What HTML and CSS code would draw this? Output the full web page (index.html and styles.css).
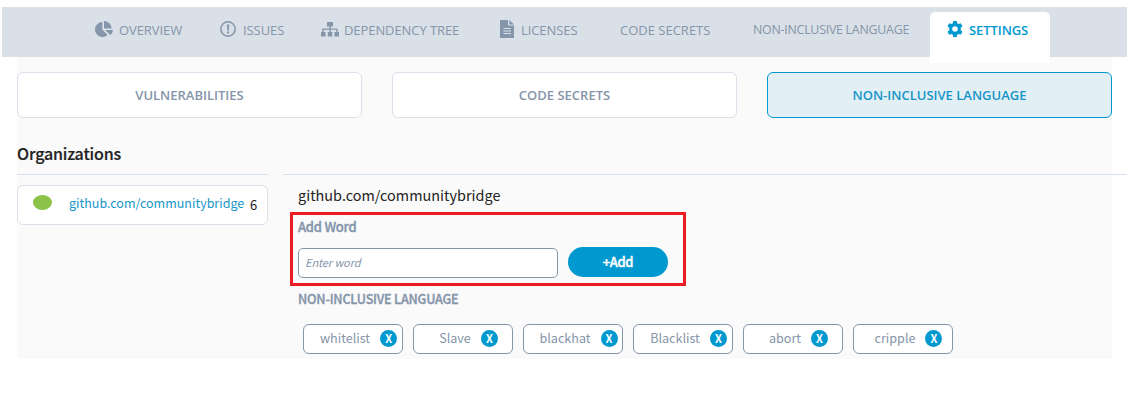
FILE: index.html
```html
<!DOCTYPE html>
<html lang="en">
<head>
<meta charset="utf-8">
<title>Settings</title>
<link rel="stylesheet" href="styles.css">
</head>
<body>
<nav class="tabs">
  <a class="tab"><svg class="icon" width="18" height="17" viewBox="0 0 18 17"><path d="M7.300 1v7.600l5.300 5.400A7.500 7.500 0 1 1 7.300 1z"/><path d="M9 0a7.500 7.500 0 0 1 7.500 7.500H9z"/><path d="M10 9h8a7 7 0 0 1-2.600 5z"/></svg><span>OVERVIEW</span></a>
  <a class="tab tab-issues"><svg class="icon" width="16" height="16" viewBox="0 0 16 16"><circle cx="8" cy="8" r="7.2" fill="none" stroke="currentColor" stroke-width="1.5"/><path d="M7 3.400h2.200L8.900 9.400H7.300zM7 10.600h2v2H7z"/></svg><span>ISSUES</span></a>
  <a class="tab tab-tree"><svg class="icon" width="18" height="15" viewBox="0 0 18 15"><path d="M6 0h6v4.500H9.700v2h7V10h-1.400V7.800H9.700V10H8.300V7.800H2.700V10H1.300V6.500h7v-2H6z"/><path d="M0 10h4.500v4.500H0zM6.800 10h4.500v4.500H6.800zM13.500 10H18v4.500h-4.500z"/></svg><span>DEPENDENCY TREE</span></a>
  <a class="tab tab-file"><svg class="icon" width="14" height="18" viewBox="0 0 14 18"><path fill-rule="evenodd" d="M0 0h8v5.500h6V18H0zM3.500 8v1h7.500V8zM3.500 10.500v1h7.500v-1zM3.500 13v1h7.500v-1z"/><path d="M9.300 0 14 4.500H9.300z"/></svg><span>LICENSES</span></a>
  <a class="tab tab-secrets"><span>CODE SECRETS</span></a>
  <a class="tab tab-language"><span>NON-INCLUSIVE LANGUAGE</span></a>
  <a class="tab tab-active"><svg class="icon" width="16" height="16" viewBox="0 0 16 16"><path fill-rule="evenodd" d="M6.200 0h3.600l.4 2.200 1.300.8 2.200-.8 1.800 3-1.800 1.500v2.600l1.800 1.500-1.800 3-2.200-.8-1.300.8-.4 2.200H6.200L5.800 13.800 4.500 13l-2.200.8-1.800-3 1.800-1.500V6.700L.5 5.200l1.800-3L4.500 3l1.300-.8zM8 5.200a2.800 2.800 0 1 0 0 5.600 2.800 2.800 0 0 0 0-5.600z"/></svg><span>SETTINGS</span></a>
</nav>
<main class="panel">
  <div class="sections">
    <button class="section">VULNERABILITIES</button>
    <button class="section">CODE SECRETS</button>
    <button class="section section-active">NON-INCLUSIVE LANGUAGE</button>
  </div>
  <div class="columns">
    <aside class="orgs">
      <h2 class="orgs-title">Organizations</h2>
      <div class="org"><i class="dot"></i><a class="org-name">github.com/communitybridge</a><span class="org-count">6</span></div>
    </aside>
    <section class="detail">
      <div class="detail-title">github.com/communitybridge</div>
      <form class="add-word">
        <label class="label add-label" for="word">Add Word</label>
        <div class="add-row">
          <input class="word-input" id="word" placeholder="Enter word">
          <button class="add-button" type="button"><span>+Add</span></button>
        </div>
      </form>
      <div class="label list-label">NON-INCLUSIVE LANGUAGE</div>
      <div class="words">
        <div class="word"><span>whitelist</span><b class="remove">X</b></div>
        <div class="word"><span>Slave</span><b class="remove">X</b></div>
        <div class="word"><span>blackhat</span><b class="remove">X</b></div>
        <div class="word"><span>Blacklist</span><b class="remove">X</b></div>
        <div class="word"><span>abort</span><b class="remove">X</b></div>
        <div class="word"><span>cripple</span><b class="remove">X</b></div>
      </div>
    </section>
  </div>
</main>
</body>
</html>
```
FILE: styles.css
```css
* { box-sizing: border-box; }
body { margin: 0; padding: 7px 0 0; background: #fff; font-family: "Noto Sans CJK SC", "Noto Sans", sans-serif; }
.tabs { display: grid; grid-template-columns: 125px 101px 179px 120px 133px 177px 120px; width: 1125px; height: 50px; margin-left: 2px; padding-left: 93px; background: #d9e0e7; color: #8595aa; font: 13px/18px "Open Sans", sans-serif; }
.tab { display: flex; align-items: flex-start; gap: 6px; padding-top: 14px; white-space: nowrap; }
.tab span { letter-spacing: -.08px; }
.icon { fill: currentColor; flex: none; }
.tab-issues, .tab-file { gap: 7px; }
.tab-file .icon { margin-top: -1px; }
.tab-tree { gap: 5px; }
.tab-tree .icon { margin-top: 1px; }
.tab-secrets span { letter-spacing: 0; }
.tab-language span { font-size: 12.4px; letter-spacing: -.25px; }
.tab-active { position: relative; height: 51px; margin-top: 5px; padding: 9px 0 0 17px; border-radius: 5px 5px 0 0; background: #fff; color: #0099cf; font-weight: 600; }
.panel { width: 1095px; height: 302px; margin-left: 17px; padding-top: 15px; background: #fafafa; }
.sections { display: grid; grid-template-columns: repeat(3, 345px); gap: 30px; }
.section { height: 46px; padding: 0; border: 1px solid #d9e0e9; border-radius: 6px; background: #fff; color: #8595aa; font: 600 13px/18px "Open Sans", sans-serif; }
.section-active { border-color: #0099cf; background: #e2f0f5; color: #1795c8; }
.columns { display: flex; gap: 15px; width: 1110px; padding-top: 24px; }
.orgs { width: 251px; }
.orgs-title { height: 33px; margin: 0 0 10px; border-bottom: 1px solid #d5e0ea; color: #222; font-size: 16px; line-height: 22px; font-weight: 500; letter-spacing: -.15px; -webkit-text-stroke: .2px currentColor; }
.org { display: flex; align-items: center; height: 40px; padding-left: 15px; border: 1px solid #d9e0e9; border-radius: 6px; background: #fff; font-size: 12.5px; line-height: 20px; }
.dot { width: 19px; height: 15px; margin: -5px 17px 0 0; border-radius: 50%; background: #8bc34a; }
.org-name { width: 181px; margin-top: -5px; color: #1795c8; }
.org-count { font-size: 13px; color: #222; }
.detail { width: 844px; margin-top: 32px; padding: 11px 0 0 7px; border-top: 1px solid #d5e0ea; }
.detail-title { height: 26px; padding-left: 8px; color: #222; font-size: 14.4px; line-height: 18px; letter-spacing: .03px; }
.add-word { width: 396px; height: 74px; padding: 2px 5px 0; border: 3px solid #ed1c24; }
.label { color: #8595aa; font-size: 13px; font-weight: 500; line-height: 20px; letter-spacing: -.25px; -webkit-text-stroke: .35px currentColor; }
.add-label { display: block; height: 30px; }
.add-row { display: flex; gap: 10px; }
.word-input { width: 260px; height: 30px; margin-top: 1px; padding: 0 6px 3px; border: 1px solid #8595aa; border-radius: 5px; background: #fff; font: italic 11px/18px "Noto Sans CJK SC", sans-serif; letter-spacing: -.1px; }
.word-input::placeholder { color: #8595aa; opacity: 1; }
.add-button { width: 100px; height: 30px; padding: 0; border: 0; border-radius: 15px; background: #0099cf; color: #fff; font: 500 13px/20px "Noto Sans CJK SC", sans-serif; letter-spacing: -.4px; -webkit-text-stroke: .4px currentColor; }
.list-label { padding: 3px 0 0 8px; font-size: 12.6px; letter-spacing: -.2px; }
.words { display: flex; gap: 10px; padding: 15px 0 0 13px; }
.word { display: flex; align-items: center; justify-content: center; gap: 10px; width: 100px; height: 30px; padding-left: 11px; border: 1px solid #8595aa; border-radius: 6px; background: #fff; color: #8595aa; font-size: 12.6px; line-height: 20px; }
.word span { margin-top: -2px; }
.remove { width: 17px; height: 17px; margin-top: -1px; border-radius: 50%; background: #0099cf; color: #fff; font-size: 11px; line-height: 17px; text-align: center; }
```
